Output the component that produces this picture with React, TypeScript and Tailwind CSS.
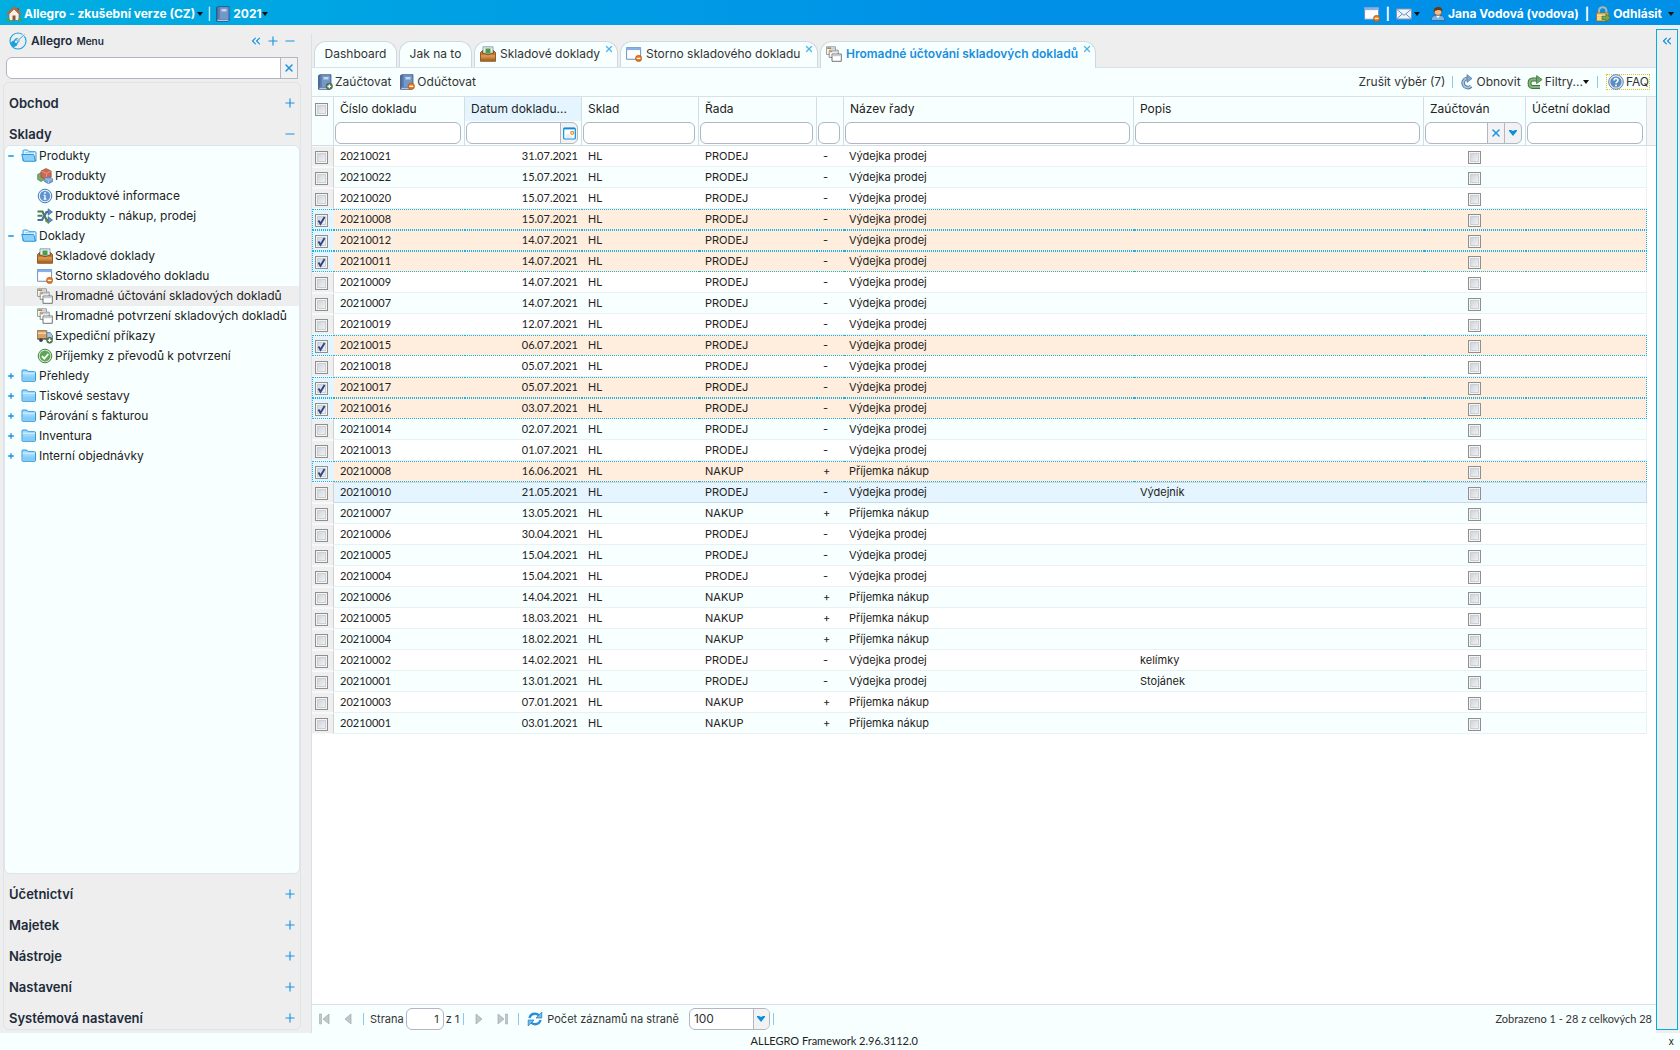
import type { ReactNode } from 'react';
import clsx from 'clsx';
import { ChevronsLeft, Minus, Plus, X } from 'lucide-react';

type IconProps = { className?: string };

/* ---------- Icons ---------- */

function Svg({ children, className }: { children: ReactNode; className?: string }) {
  return (
    <svg viewBox="0 0 16 16" aria-hidden="true" className={clsx('h-4 w-4 shrink-0', className)}>
      {children}
    </svg>
  );
}

const HomeIcon = () => (
  <Svg>
    <path d="M11 2h2v4h-2z" fill="#a8502c" />
    <path d="M3 8l5-5 5 5v6.5H3z" fill="#f7f0e2" stroke="#7b6a58" strokeWidth=".7" />
    <path d="M.8 8.6L8 1.6l7.2 7" fill="none" stroke="#b9683c" strokeWidth="2" />
    <path d="M6.5 9.5h3v5h-3z" fill="#8a5a36" />
    <path d="M0 13.5q2-2.4 4 0v1.5H0zM12 13.5q2-2.4 4 0v1.5h-4z" fill="#5d9a3a" />
  </Svg>
);

const BookShape = () => (
  <>
    <path d="M1.5 1.5L3 .7h11v13.6l-1 1H1.5z" fill="#4a6c9e" stroke="#2c4672" strokeWidth=".7" />
    <path d="M3.5 1.2h10v12h-10z" fill="#7397c8" />
    <path d="M3.500 1.200h1.200v12H3.500z" fill="#5577a8" />
    <path d="M6.500 3h5v2.500h-5z" fill="#c3d6ef" />
    <path d="M2.300 14.300h11" stroke="#e7edf6" strokeWidth=".9" />
  </>
);

const BookIcon = () => (
  <Svg>
    <BookShape />
  </Svg>
);

const BookAddIcon = () => (
  <Svg>
    <BookShape />
    <circle cx="12.3" cy="12.3" r="3.2" fill="#5c7a56" stroke="#3a5a30" strokeWidth=".6" />
    <path d="M12.3 10.4v3.8M10.4 12.3h3.8" stroke="#fff" strokeWidth="1.3" />
  </Svg>
);

const BookRemoveIcon = () => (
  <Svg>
    <BookShape />
    <circle cx="12.3" cy="12.3" r="3.2" fill="#e8771e" stroke="#b4540e" strokeWidth=".6" />
    <path d="M10.4 12.3h3.8" stroke="#fff" strokeWidth="1.3" />
  </Svg>
);

const WindowRemoveIcon = () => (
  <Svg>
    <path d="M.6 1.5h14v11.8H.6z" fill="#fff" stroke="#6f93c4" />
    <path d="M.6 1.5h14v2.6H.6z" fill="#86b0e6" />
    <path d="M1.5 12.4h9" stroke="#d9e3ef" />
    <circle cx="12.6" cy="12.4" r="3.1" fill="#e8771e" stroke="#a95410" strokeWidth=".6" />
    <path d="M10.8 12.4h3.6" stroke="#fff" strokeWidth="1.3" />
  </Svg>
);

const MailIcon = () => (
  <Svg>
    <path d="M.5 3h15v10H.5z" fill="#eef4fb" stroke="#8299b8" />
    <path d="M1 3.5l7 5.8 7-5.8M1 12.6l5-4.4M15 12.6l-5-4.4" fill="none" stroke="#6d8fbd" />
  </Svg>
);

const UserIcon = () => (
  <Svg>
    <path d="M1.200 14.500q0-5 4.600-5h4.400q4.600 0 4.600 5z" fill="#78b4e6" stroke="#2f5f96" strokeWidth=".8" />
    <path d="M6 9.600h4l-2 2.600z" fill="#fff" />
    <circle cx="8" cy="5.600" r="3.800" fill="#f1bd8c" stroke="#7a4321" strokeWidth=".6" />
    <path d="M3.800 6.300Q3 1 8 .9t4.200 5.400Q11.300 3.700 8 4t-4.200 2.300z" fill="#6c3513" />
  </Svg>
);

const LockIcon = () => (
  <Svg>
    <path d="M4 8V5q0-3.800 3.700-3.800T11.400 5v3" fill="none" stroke="#b4b4a8" strokeWidth="2" />
    <path d="M1.500 7h12v8h-12z" fill="#eec468" stroke="#9a742a" strokeWidth=".8" />
    <path d="M2.200 9.400h10.600M2.200 11.600h10.600M2.200 13.400h10.600" stroke="#fbe6a8" strokeWidth=".9" />
    <path d="M7 10.200h4V7.800l4.700 4-4.700 4v-2.300H7z" fill="#74a84e" stroke="#3e6b28" strokeWidth=".7" />
  </Svg>
);

const LogoIcon = () => (
  <svg viewBox="0 0 18 18" aria-hidden="true" className="h-[18px] w-[18px] shrink-0">
    <circle cx="9" cy="9" r="8" fill="none" stroke="#1aa0e0" strokeWidth="1.1" />
    <path d="M2 12q-.5-3 3-3.500Q5.600 5.500 9 6q2.500.6 1.700 3-.6 1.500-2 1.800Q8.500 15 4.500 14.900 2.300 14.800 2 12z" fill="#1a9fe0" />
    <path d="M8 9l8-7" stroke="#eeeeee" strokeWidth="2.4" />
    <path d="M6 11.200l9.500-8.700" stroke="#1aa0e0" strokeWidth=".9" />
    <circle cx="7" cy="9.800" r="1.200" fill="#eeeeee" />
  </svg>
);

const FolderOpenIcon = () => (
  <Svg>
    <path d="M2 13V3q0-1 1-1h3.500l1.300 1.700H14q1 0 1 1V13" fill="#e2f4ff" stroke="#1c8fd8" strokeWidth=".9" />
    <path d="M.7 6.500h11.500q.6 0 .7.600L14.500 13.300H2.700z" fill="#8fd0fa" stroke="#1c8fd8" strokeWidth=".9" />
    <path d="M4 4.700h9" stroke="#8fd0fa" />
  </Svg>
);

const FolderIcon = () => (
  <Svg>
    <path d="M1 12.500V2.800Q1 2 1.800 2h4l1.400 1.700h6.500q.8 0 .8.800v8q0 .8-.8.800H1.800q-.8 0-.8-.8z" fill="#9ed7fc" stroke="#1c8fd8" strokeWidth=".9" />
    <path d="M1.500 5.200h12.500" stroke="#e2f4ff" />
    <path d="M1.500 8.500h12.500v4H1.500z" fill="#84cbf8" />
  </Svg>
);

const BoxesIcon = () => (
  <Svg>
    <path d="M.6 6.500l3.600-2 3.200 2v5.300l-3.400 1.700-3.400-2z" fill="#79a86c" stroke="#4c7442" strokeWidth=".6" />
    <path d="M4 3l5-2.500L14.200 3v6L9.600 11.500 4 9z" fill="#cc6a54" stroke="#96432e" strokeWidth=".6" />
    <path d="M4 3l5.500 2.300L14.200 3M9.500 5.300v6" stroke="#eda892" strokeWidth=".7" fill="none" />
    <path d="M7.600 10.500l4-1.700 3.900 1.700v3.200l-4 2-3.900-2z" fill="#7aa3da" stroke="#45699f" strokeWidth=".6" />
    <path d="M7.600 10.500l4 1.700 3.900-1.700M11.600 12.200v3.300" stroke="#bed4f2" strokeWidth=".7" fill="none" />
  </Svg>
);

const InfoIcon = () => (
  <Svg>
    <circle cx="8" cy="8" r="6.800" fill="#e6f0fb" stroke="#4a78b2" />
    <circle cx="8" cy="8" r="5.200" fill="#5f94d2" />
    <path d="M8 7.200v3.900M6.800 7.400H8M6.600 11.200h2.800" stroke="#fff" strokeWidth="1.300" />
    <circle cx="8" cy="4.900" r=".95" fill="#fff" />
  </Svg>
);

const SwapIcon = () => (
  <Svg>
    <path d="M.5 3.500h5l4 8.500h3" fill="none" stroke="#4b7d4a" strokeWidth="2.200" />
    <path d="M.5 12h4.500l4.500-8h2.500" fill="none" stroke="#4a6f9e" strokeWidth="2.200" />
    <path d="M.5 7.700H5.500" stroke="#4f7a5c" strokeWidth="2" />
    <path d="M11 .8l4.500 3.200-4.500 3.200zM11 8.600l4.500 3.400-4.500 3.400z" fill="#5e8fbb" stroke="#355b80" strokeWidth=".6" />
    <path d="M8.500 12.500l3.500 2.700" stroke="#5d9a4a" strokeWidth="1.600" />
  </Svg>
);

const CabinetIcon = () => (
  <Svg>
    <path d="M3 .8h10v7H3z" fill="#e4eef4" stroke="#75909a" strokeWidth=".8" />
    <path d="M5.500 2.500h5v5h-5z" fill="#519a4c" />
    <path d="M.5 6.500L2.500 4.500v2.800h2.500l1 1.200h4l1-1.200h2.500V4.500l2 2v8.800H.5z" fill="#c07a34" stroke="#80430f" strokeWidth=".8" />
    <path d="M1 9h14v2.500H1z" fill="#d9944c" />
    <path d="M1 14h14" stroke="#9a5a20" strokeWidth="1" />
  </Svg>
);

const StackIcon = () => (
  <Svg>
    <path d="M.6.8h8.800v7.600H.6z" fill="#fff" stroke="#8a8a8a" strokeWidth=".9" />
    <path d="M1.200 2.200h7.600" stroke="#c9ccd0" strokeWidth="1.600" />
    <path d="M1.400 2.200h2" stroke="#58a048" strokeWidth="1.500" />
    <path d="M3.400 2.200h1.600" stroke="#d8662c" strokeWidth="1.500" />
    <path d="M3.200 4.200h9v7.200h-9z" fill="#fff" stroke="#808080" strokeWidth=".9" />
    <path d="M3.800 5.600h7.800" stroke="#c9ccd0" strokeWidth="1.600" />
    <path d="M4 5.600h2" stroke="#d8962c" strokeWidth="1.500" />
    <path d="M6 8h9.300v7.300H6z" fill="#fff" stroke="#606468" strokeWidth=".9" />
    <path d="M6.500 9.400h8.300" stroke="#c4cbd2" strokeWidth="1.600" />
  </Svg>
);

const TruckIcon = () => (
  <Svg>
    <path d="M.4 2.600h9.400v8H.4z" fill="#d9a266" stroke="#8a5c2c" strokeWidth=".8" />
    <path d="M.8 5.200h8.600" stroke="#f3d6ae" strokeWidth="1.500" />
    <path d="M9.800 4.600h3.400l2.300 3v3H9.800z" fill="#a9c4e2" stroke="#4f6e94" strokeWidth=".8" />
    <path d="M.4 10.500h11v1.200H.4z" fill="#545454" />
    <circle cx="4" cy="12.200" r="1.700" fill="#3c3c3c" />
    <circle cx="12.600" cy="12.300" r="3" fill="#5c7a56" stroke="#3a5a30" strokeWidth=".6" />
    <path d="M12.600 10.600V14M10.900 12.300h3.400" stroke="#fff" strokeWidth="1.200" />
  </Svg>
);

const ApprovedIcon = () => (
  <Svg>
    <circle cx="8" cy="8" r="6.800" fill="#d8ecd4" stroke="#4d8446" />
    <circle cx="8" cy="8" r="5.400" fill="#5fa556" />
    <path d="M5 8.200l2.300 2.400 4-4.600" fill="none" stroke="#fff" strokeWidth="1.900" />
  </Svg>
);

const ReloadIcon = () => (
  <Svg>
    <path d="M12 12.200A4.600 4.600 0 1 1 7.800 4.500h1.500" fill="none" stroke="#52779f" strokeWidth="3.600" />
    <path d="M12 12.200A4.600 4.600 0 1 1 7.800 4.500h1.500" fill="none" stroke="#a9c3df" strokeWidth="1.800" />
    <path d="M8 .6l5 3.900-5 3.900z" fill="#85a6c9" stroke="#52779f" strokeWidth=".7" />
  </Svg>
);

const FilterIcon = () => (
  <Svg>
    <path d="M13 13H5.500Q2.500 13 2.500 9.300T5.500 5.500H10" fill="none" stroke="#41743d" strokeWidth="3.800" />
    <path d="M13 13H5.500Q2.500 13 2.500 9.300T5.500 5.500H10" fill="none" stroke="#83b87b" strokeWidth="1.900" />
    <path d="M9.600 1.600l5.500 4-5.500 4z" fill="#6fa868" stroke="#41743d" strokeWidth=".8" />
  </Svg>
);

const HelpIcon = () => (
  <Svg className="h-3.5 w-3.5">
    <circle cx="8" cy="8" r="7.300" fill="#dfe9f5" stroke="#5e83b0" />
    <circle cx="8" cy="8" r="5.600" fill="#5c8cc4" />
    <path d="M6 6.600q0-2.200 2-2.200t2 1.800q0 1-1 1.600T8 9.500" fill="none" stroke="#fff" strokeWidth="1.500" />
    <circle cx="8" cy="11.500" r=".95" fill="#fff" />
  </Svg>
);

const SyncIcon = () => (
  <Svg>
    <path d="M2.500 7Q3.500 2.800 8 2.800q2.300 0 4 1.700" fill="none" stroke="#2c8fd4" strokeWidth="2.400" />
    <path d="M14.800 1v6H9z" fill="#6fbaf0" stroke="#1f78b8" strokeWidth=".7" />
    <path d="M13.500 9q-1 4.200-5.500 4.200-2.300 0-4-1.700" fill="none" stroke="#2c8fd4" strokeWidth="2.400" />
    <path d="M1.200 15V9H7z" fill="#6fbaf0" stroke="#1f78b8" strokeWidth=".7" />
  </Svg>
);

const CalendarIcon = () => (
  <svg viewBox="0 0 13 13" aria-hidden="true" className="h-[13px] w-[13px]">
    <rect x=".7" y="1" width="11.600" height="11" rx="1" fill="#fff" stroke="#0a8fe0" strokeWidth="1.200" />
    <path d="M1 1.600h11" stroke="#0a8fe0" strokeWidth="1.600" />
    <path d="M3 8h4M3 10h6" stroke="#d5dce4" />
    <circle cx="9.200" cy="5.800" r="1.500" fill="#fff" stroke="#f08a24" strokeWidth="1.200" />
  </svg>
);

const Caret = ({ className }: IconProps) => (
  <svg viewBox="0 0 6 4" aria-hidden="true" className={clsx('h-1 w-1.5 shrink-0', className)}>
    <path d="M0 0h6L3 4z" fill="#111" />
  </svg>
);

const BlueArrow = () => (
  <svg viewBox="0 0 8 6" aria-hidden="true" className="h-1.5 w-2">
    <path d="M0 0h2l2 1 2-1h2v1L4 6 0 1z" fill="#0a8fe0" />
  </svg>
);

function PageArrow({ back = false, edge = false }: { back?: boolean; edge?: boolean }) {
  return (
    <Svg className={back ? 'rotate-180' : ''}>
      <path d="M4 3l6 5-6 5z" fill="#c3c7c9" stroke="#a2a6a8" strokeWidth=".7" />
      {edge && <path d="M11.500 3h2v10h-2z" fill="#c3c7c9" stroke="#a2a6a8" strokeWidth=".6" />}
    </Svg>
  );
}

/* ---------- Small controls ---------- */

function CheckBox({ checked = false, label }: { checked?: boolean; label: string }) {
  return (
    <span className="relative block h-[13px] w-[13px]">
      <input
        type="checkbox"
        defaultChecked={checked}
        aria-label={label}
        className="peer block h-[13px] w-[13px] appearance-none border border-[#8e8f8f] bg-linear-to-br from-[#c8ced6] to-[#f8f8f8] shadow-[inset_0_0_0_1px_#f4f4f4,inset_0_0_0_2px_#ccd0d4]"
      />
      <svg viewBox="0 0 13 13" aria-hidden="true" className="pointer-events-none absolute inset-0 hidden h-[13px] w-[13px] peer-checked:block">
        <path d="M3.500 6.500l2 3.300L9.600 3" fill="none" stroke="#31478c" strokeWidth="1.900" />
      </svg>
    </span>
  );
}

const fieldClass = 'h-[22px] w-full min-w-0 border border-[#b0b6c2] bg-white px-1 outline-none';

const Divider = ({ className }: IconProps) => <span className={clsx('h-3 w-px shrink-0 bg-[#8cc8f0]', className)} />;

/* ---------- Data ---------- */

type TreeItem = { label: string; icon: () => ReactNode; level: number; state?: 'open' | 'closed'; active?: boolean };

const tree: TreeItem[] = [
  { label: 'Produkty', icon: FolderOpenIcon, level: 0, state: 'open' },
  { label: 'Produkty', icon: BoxesIcon, level: 1 },
  { label: 'Produktové informace', icon: InfoIcon, level: 1 },
  { label: 'Produkty - nákup, prodej', icon: SwapIcon, level: 1 },
  { label: 'Doklady', icon: FolderOpenIcon, level: 0, state: 'open' },
  { label: 'Skladové doklady', icon: CabinetIcon, level: 1 },
  { label: 'Storno skladového dokladu', icon: WindowRemoveIcon, level: 1 },
  { label: 'Hromadné účtování skladových dokladů', icon: StackIcon, level: 1, active: true },
  { label: 'Hromadné potvrzení skladových dokladů', icon: StackIcon, level: 1 },
  { label: 'Expediční příkazy', icon: TruckIcon, level: 1 },
  { label: 'Příjemky z převodů k potvrzení', icon: ApprovedIcon, level: 1 },
  { label: 'Přehledy', icon: FolderIcon, level: 0, state: 'closed' },
  { label: 'Tiskové sestavy', icon: FolderIcon, level: 0, state: 'closed' },
  { label: 'Párování s fakturou', icon: FolderIcon, level: 0, state: 'closed' },
  { label: 'Inventura', icon: FolderIcon, level: 0, state: 'closed' },
  { label: 'Interní objednávky', icon: FolderIcon, level: 0, state: 'closed' },
];

type Row = { id: string; date: string; type: 'PRODEJ' | 'NAKUP'; note?: string; selected?: boolean; hover?: boolean };

const rows: Row[] = [
  { id: '20210021', date: '31.07.2021', type: 'PRODEJ' },
  { id: '20210022', date: '15.07.2021', type: 'PRODEJ' },
  { id: '20210020', date: '15.07.2021', type: 'PRODEJ' },
  { id: '20210008', date: '15.07.2021', type: 'PRODEJ', selected: true },
  { id: '20210012', date: '14.07.2021', type: 'PRODEJ', selected: true },
  { id: '20210011', date: '14.07.2021', type: 'PRODEJ', selected: true },
  { id: '20210009', date: '14.07.2021', type: 'PRODEJ' },
  { id: '20210007', date: '14.07.2021', type: 'PRODEJ' },
  { id: '20210019', date: '12.07.2021', type: 'PRODEJ' },
  { id: '20210015', date: '06.07.2021', type: 'PRODEJ', selected: true },
  { id: '20210018', date: '05.07.2021', type: 'PRODEJ' },
  { id: '20210017', date: '05.07.2021', type: 'PRODEJ', selected: true },
  { id: '20210016', date: '03.07.2021', type: 'PRODEJ', selected: true },
  { id: '20210014', date: '02.07.2021', type: 'PRODEJ' },
  { id: '20210013', date: '01.07.2021', type: 'PRODEJ' },
  { id: '20210008', date: '16.06.2021', type: 'NAKUP', selected: true },
  { id: '20210010', date: '21.05.2021', type: 'PRODEJ', note: 'Výdejník', hover: true },
  { id: '20210007', date: '13.05.2021', type: 'NAKUP' },
  { id: '20210006', date: '30.04.2021', type: 'PRODEJ' },
  { id: '20210005', date: '15.04.2021', type: 'PRODEJ' },
  { id: '20210004', date: '15.04.2021', type: 'PRODEJ' },
  { id: '20210006', date: '14.04.2021', type: 'NAKUP' },
  { id: '20210005', date: '18.03.2021', type: 'NAKUP' },
  { id: '20210004', date: '18.02.2021', type: 'NAKUP' },
  { id: '20210002', date: '14.02.2021', type: 'PRODEJ', note: 'kelímky' },
  { id: '20210001', date: '13.01.2021', type: 'PRODEJ', note: 'Stojánek' },
  { id: '20210003', date: '07.01.2021', type: 'NAKUP' },
  { id: '20210001', date: '03.01.2021', type: 'NAKUP' },
];

const columns = [
  { title: 'Číslo dokladu' },
  { title: 'Datum dokladu...', kind: 'date' },
  { title: 'Sklad' },
  { title: 'Řada' },
  { title: '' },
  { title: 'Název řady' },
  { title: 'Popis' },
  { title: 'Zaúčtován', kind: 'combo' },
  { title: 'Účetní doklad' },
];

/* ---------- Page parts ---------- */

function Header() {
  return (
    <header className="flex h-[25px] shrink-0 items-center justify-between bg-linear-to-r from-[#00aee0] to-[#0090e8] to-60% px-1.5 pt-0.5 font-bold text-white">
      <div className="flex items-center">
        <button type="button" className="flex items-center gap-0.5">
          <HomeIcon />
          <span>Allegro - zkušební verze (CZ)</span>
          <Caret />
        </button>
        <span className="mx-1 font-normal">|</span>
        <button type="button" className="flex items-center">
          <BookIcon />
          <span className="ml-0.5">2021</span>
          <Caret />
        </button>
      </div>
      <div className="flex items-center">
        <button type="button" aria-label="Okna">
          <WindowRemoveIcon />
        </button>
        <span className="mx-1.5">|</span>
        <button type="button" aria-label="Zprávy" className="flex items-center gap-0.5">
          <MailIcon />
          <Caret />
        </button>
        <button type="button" className="ml-2.5 flex items-center gap-0.5">
          <UserIcon />
          <span>Jana Vodová (vodova)</span>
        </button>
        <span className="mx-1.5">|</span>
        <button type="button" className="flex items-center gap-0.5">
          <LockIcon />
          <span>Odhlásit</span>
          <Caret className="ml-1" />
        </button>
      </div>
    </header>
  );
}

function AccordionHeader({ title, open = false }: { title: string; open?: boolean }) {
  return (
    <button type="button" className="flex h-[31px] w-full shrink-0 items-center justify-between pt-2 pr-[3px] pl-[5px] text-[13px] font-semibold text-[#1d2b3a]">
      {title}
      {open ? <Minus className="h-3.5 w-3.5 text-[#1a94e4]" /> : <Plus className="h-3.5 w-3.5 text-[#1a94e4]" />}
    </button>
  );
}

function Sidebar() {
  return (
    <aside className="flex w-[311px] shrink-0 flex-col pb-[3px]">
      <div className="flex h-8 shrink-0 items-center pr-3.5 pl-[9px]">
        <LogoIcon />
        <span className="ml-1 text-[12px] font-semibold text-[#1d2b3a]">Allegro</span>
        <span className="ml-1 text-[10px] font-semibold text-[#1d2b3a]">Menu</span>
        <div className="ml-auto flex items-center gap-[3px] text-[#1a94e4]">
          <button type="button" aria-label="Sbalit menu">
            <ChevronsLeft className="h-3.5 w-3.5" />
          </button>
          <button type="button" aria-label="Rozbalit vše">
            <Plus className="h-3.5 w-3.5" />
          </button>
          <button type="button" aria-label="Sbalit vše">
            <Minus className="h-3.5 w-3.5" />
          </button>
        </div>
      </div>
      <div className="mr-[13px] ml-1.5 flex shrink-0">
        <input type="text" aria-label="Hledat v menu" className={clsx(fieldClass, 'rounded-l-md')} />
        <button type="button" aria-label="Vymazat" className="-ml-px flex h-[22px] w-[18px] shrink-0 items-center justify-center border border-[#b0b6c2] bg-[#f2f2f2] text-[#1a94e4]">
          <X className="h-3 w-3" strokeWidth={3} />
        </button>
      </div>
      <nav className="mt-[3px] mr-2.5 ml-[3px] flex min-h-0 flex-1 flex-col rounded-md border border-[#dde4ea]">
        <AccordionHeader title="Obchod" />
        <AccordionHeader title="Sklady" open />
        <div className="flex min-h-0 flex-1 flex-col overflow-hidden rounded-md border border-[#dde4ea] bg-[#f8ffff]">
          {tree.map((item) => (
            <a
              key={item.label + item.level}
              href="#"
              className={clsx(
                'flex h-5 shrink-0 items-center whitespace-nowrap text-[#222]',
                item.level === 0 ? 'gap-0.5 pl-0.5' : 'gap-0.5 pl-8',
                item.active && 'bg-[#eeeeee]'
              )}
            >
              {item.state && (
                <span className="mr-1 flex w-2 justify-center text-[#1a94e4]">
                  {item.state === 'open' ? <Minus className="h-2 w-2" strokeWidth={4} /> : <Plus className="h-2 w-2" strokeWidth={4} />}
                </span>
              )}
              <item.icon />
              {item.label}
            </a>
          ))}
        </div>
        <AccordionHeader title="Účetnictví" />
        <AccordionHeader title="Majetek" />
        <AccordionHeader title="Nástroje" />
        <AccordionHeader title="Nastavení" />
        <AccordionHeader title="Systémová nastavení" />
      </nav>
    </aside>
  );
}

function Tab({ title, icon, width, active = false }: { title: string; icon?: ReactNode; width: string; active?: boolean }) {
  return (
    <div
      className={clsx(
        'flex shrink-0 rounded-t-xl border border-b-0 border-[#cdd8e0] bg-[#f8ffff]',
        width,
        active ? '-mb-px h-[27px] pb-px font-semibold text-[#1a8fdc]' : 'h-[26px] text-[#333]'
      )}
    >
      <button type="button" role="tab" aria-selected={active} className={clsx('flex flex-1 items-center gap-1 whitespace-nowrap pb-px', icon ? 'pl-[5px]' : 'justify-center')}>
        {icon}
        {title}
      </button>
      {icon && (
        <button type="button" aria-label={`Zavřít ${title}`} className="mt-px mr-0.5 flex h-3 w-3 items-center justify-center text-[#4ab4ec]">
          <X className="h-2.5 w-2.5" strokeWidth={3} />
        </button>
      )}
    </div>
  );
}

function TabBar() {
  return (
    <div role="tablist" className="flex h-[34px] shrink-0 items-end gap-0.5 border-b border-[#d8e2e8] pl-0.5">
      <Tab title="Dashboard" width="w-[83px]" />
      <Tab title="Jak na to" width="w-[73px]" />
      <Tab title="Skladové doklady" icon={<CabinetIcon />} width="w-[144px]" />
      <Tab title="Storno skladového dokladu" icon={<WindowRemoveIcon />} width="w-[198px]" />
      <Tab title="Hromadné účtování skladových dokladů" icon={<StackIcon />} width="w-[276px]" active />
    </div>
  );
}

function Toolbar() {
  return (
    <div className="flex h-[29px] shrink-0 items-center justify-between border-b border-[#dbe0e8] bg-[#f8ffff] pr-1.5 pl-[5px] text-[#333]">
      <div className="flex items-center gap-2">
        <button type="button" className="flex items-center gap-0.5">
          <BookAddIcon />
          Zaúčtovat
        </button>
        <button type="button" className="flex items-center gap-0.5">
          <BookRemoveIcon />
          Odúčtovat
        </button>
      </div>
      <div className="flex items-center">
        <button type="button">Zrušit výběr (7)</button>
        <Divider className="mx-1.5" />
        <button type="button" className="flex items-center gap-0.5">
          <ReloadIcon />
          Obnovit
        </button>
        <button type="button" className="ml-1.5 flex items-center">
          <FilterIcon />
          <span className="ml-0.5">Filtry...</span>
          <Caret />
        </button>
        <Divider className="mx-2" />
        <a href="#" className="flex h-4 items-center gap-0.5 border border-dotted border-[#f0c020] pl-px">
          <HelpIcon />
          FAQ
        </a>
      </div>
    </div>
  );
}

function ColumnFilter({ title, kind }: { title: string; kind?: string }) {
  const label = `Filtr ${title || 'znaménko'}`;
  if (kind === 'date') {
    return (
      <div className="flex">
        <input type="text" aria-label={label} className={clsx(fieldClass, 'rounded-l-md')} />
        <button type="button" aria-label="Vybrat datum" className="-ml-px flex h-[22px] w-[18px] shrink-0 items-center justify-center rounded-r-md border border-[#b0b6c2] bg-[#f2f2f2]">
          <CalendarIcon />
        </button>
      </div>
    );
  }
  if (kind === 'combo') {
    return (
      <div className="flex">
        <input type="text" aria-label={label} className={clsx(fieldClass, 'rounded-l-md')} />
        <button type="button" aria-label="Vymazat" className="-ml-px flex h-[22px] w-[18px] shrink-0 items-center justify-center border border-[#b0b6c2] bg-[#f2f2f2] text-[#1a94e4]">
          <X className="h-3 w-3" strokeWidth={3} />
        </button>
        <button type="button" aria-label="Rozbalit" className="-ml-px flex h-[22px] w-[18px] shrink-0 items-center justify-center rounded-r-md border border-[#b0b6c2] bg-[#f2f2f2]">
          <BlueArrow />
        </button>
      </div>
    );
  }
  return <input type="text" aria-label={label} className={clsx(fieldClass, 'block rounded-md')} />;
}

function Grid() {
  return (
    <div className="min-h-0 flex-1 overflow-hidden bg-white">
      <table className="w-full table-fixed border-separate border-spacing-0 text-[11px] leading-4 text-[#222]">
        <colgroup>
          <col className="w-[22px]" />
          <col className="w-[131px]" />
          <col className="w-[117px]" />
          <col className="w-[117px]" />
          <col className="w-[118px]" />
          <col className="w-[27px]" />
          <col />
          <col />
          <col className="w-[102px]" />
          <col className="w-[121px]" />
          <col className="w-[9px]" />
        </colgroup>
        <thead className="bg-[#f8ffff]">
          <tr className="h-6">
            <th rowSpan={2} className="border-r border-b border-[#d4dce4] pt-1.5 pl-[3px] align-top">
              <CheckBox label="Vybrat vše" />
            </th>
            {columns.map((col) => (
              <th key={col.title} className={clsx('truncate border-r border-[#d4dce4] p-0 pl-1.5 text-left text-[12px] leading-4 font-normal', col.kind === 'date' && 'bg-[#e4f5ff]')}>
                {col.title}
              </th>
            ))}
            <th rowSpan={2} className="border-b border-[#d4dce4] bg-[#f5f5f5] p-0"></th>
          </tr>
          <tr className="h-[25px]">
            {columns.map((col) => (
              <th key={col.title} className="border-r border-b border-[#d4dce4] p-0 pr-[3px] pl-px font-normal">
                <ColumnFilter title={col.title} kind={col.kind} />
              </th>
            ))}
          </tr>
        </thead>
        <tbody>
          {rows.map((row, i) => {
            const sale = row.type === 'PRODEJ';
            const cell = clsx(
              'truncate border-y p-0 pb-px',
              row.selected && 'border-dotted border-[#1ab2de] bg-[#ffeedd]',
              row.hover && 'border-[#c8dae6] bg-[#e4f5ff]',
              !row.selected && !row.hover && 'border-t-transparent border-r-[#e8f2f5] border-b-[#e8f2f5]',
              !row.selected && !row.hover && i % 2 === 1 && 'bg-[#f8ffff]'
            );
            return (
              <tr key={row.id + row.date} className="h-[21px]">
                <td
                  className={clsx(
                    'border-y p-0 pt-0.5',
                    row.selected ? 'border-l border-dotted border-[#1ab2de] bg-[#e4f5ff] pl-0.5' : 'border-r border-y-[#f8f8f8] border-r-[#d0d0d0] bg-[#efefef] pl-[3px]'
                  )}
                >
                  <CheckBox checked={row.selected} label={`Vybrat ${row.id}`} />
                </td>
                <td className={clsx(cell, 'pl-1.5 font-[Lato]')}>{row.id}</td>
                <td className={clsx(cell, 'pr-1 text-right font-[Lato]')}>{row.date}</td>
                <td className={clsx(cell, 'pl-1.5')}>HL</td>
                <td className={clsx(cell, 'pl-1.5')}>{row.type}</td>
                <td className={clsx(cell, 'pl-1.5')}>{sale ? '-' : '+'}</td>
                <td className={clsx(cell, 'pl-[5px]')}>{sale ? 'Výdejka prodej' : 'Příjemka nákup'}</td>
                <td className={clsx(cell, 'pl-1.5')}>{row.note}</td>
                <td className={clsx(cell, 'pt-0.5 pr-px')}>
                  <div className="flex justify-center">
                    <CheckBox label={`Zaúčtován ${row.id}`} />
                  </div>
                </td>
                <td className={clsx(cell, 'border-r')}></td>
                <td className="p-0"></td>
              </tr>
            );
          })}
        </tbody>
      </table>
    </div>
  );
}

function Pagination() {
  return (
    <div className="flex h-[29px] shrink-0 items-center border-t border-[#dbe0e8] bg-[#f8ffff] pr-1 pl-[5px] text-[11px] text-[#333]">
      <button type="button" aria-label="První strana">
        <PageArrow back edge />
      </button>
      <button type="button" aria-label="Předchozí strana" className="ml-1.5">
        <PageArrow back />
      </button>
      <Divider className="ml-2" />
      <label htmlFor="page" className="ml-1.5">
        Strana
      </label>
      <input id="page" type="text" defaultValue="1" className="ml-0.5 h-[22px] w-[38px] rounded-md border border-[#b0b6c2] bg-white px-1 text-right outline-none" />
      <span className="ml-0.5">z 1</span>
      <Divider className="ml-1" />
      <button type="button" aria-label="Další strana" className="ml-2">
        <PageArrow />
      </button>
      <button type="button" aria-label="Poslední strana" className="ml-1.5">
        <PageArrow edge />
      </button>
      <Divider className="ml-2" />
      <button type="button" aria-label="Obnovit" className="ml-2">
        <SyncIcon />
      </button>
      <label htmlFor="page-size" className="ml-1">
        Počet záznamů na straně
      </label>
      <div className="relative ml-2.5">
        <select id="page-size" defaultValue="100" className="block h-[22px] w-[81px] appearance-none rounded-md border border-[#b0b6c2] bg-white px-1 text-[12px] outline-none">
          <option>50</option>
          <option>100</option>
          <option>200</option>
        </select>
        <span className="pointer-events-none absolute inset-y-px right-px flex w-4 items-center justify-center rounded-r-[5px] border-l border-[#b0b6c2] bg-[#f2f2f2]">
          <BlueArrow />
        </span>
      </div>
      <Divider className="ml-[3px]" />
      <span className="ml-auto font-[Lato]">Zobrazeno 1 - 28 z celkových 28</span>
    </div>
  );
}

export default function App() {
  return (
    <div className="flex h-screen flex-col overflow-hidden bg-[#f8ffff] font-['Inter',sans-serif] text-[12px] leading-4 text-[#222]">
      <Header />
      <div className="flex min-h-0 flex-1 bg-[#eeeeee]">
        <Sidebar />
        <main className="mt-[9px] flex min-w-0 flex-1 flex-col border-l border-[#dbe0e8]">
          <TabBar />
          <Toolbar />
          <Grid />
          <Pagination />
        </main>
        <aside className="mt-1 mr-0.5 mb-[3px] flex w-[22px] shrink-0 flex-col items-center border border-[#00aee0] pt-1">
          <button type="button" aria-label="Rozbalit panel" className="text-[#0a8fe0]">
            <ChevronsLeft className="h-3.5 w-3.5" />
          </button>
        </aside>
      </div>
      <footer className="flex h-[17px] shrink-0 items-center pr-1.5 pb-px text-[11px]">
        <span className="flex-1 text-center font-[Lato]">ALLEGRO Framework 2.96.3112.0</span>
        <button type="button" aria-label="Zavřít" className="text-[10px]">
          x
        </button>
      </footer>
    </div>
  );
}
